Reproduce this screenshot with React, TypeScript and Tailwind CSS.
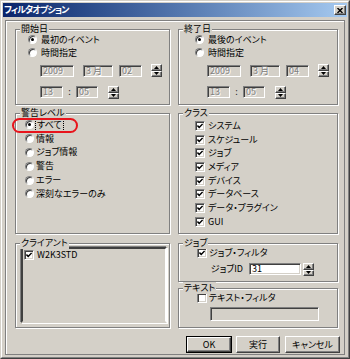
import type { ReactNode } from 'react';

const sunken =
  'border border-t-[#808080] border-l-[#808080] border-r-white border-b-white shadow-[inset_1px_1px_0_#404040,inset_-1px_-1px_0_#d4d0c8]';
const raised =
  'border border-t-white border-l-white border-r-[#404040] border-b-[#404040] shadow-[inset_-1px_-1px_0_#808080]';

function Radio({ checked }: { checked?: boolean }) {
  return (
    <span className="flex h-[9px] w-[9px] shrink-0 items-center justify-center rounded-full border border-t-[#808080] border-l-[#808080] border-r-white border-b-white bg-white shadow-[inset_1px_1px_0_#404040]">
      {checked && <span className="h-[3px] w-[3px] rounded-full bg-black" />}
    </span>
  );
}

function Check({ checked }: { checked?: boolean }) {
  return (
    <span className={`flex h-[10px] w-[10px] shrink-0 items-center justify-center bg-white ${sunken}`}>
      {checked && (
        <svg width="6" height="6" viewBox="0 0 6 6">
          <path d="M0.4 2.6 L2.2 4.4 L5.6 0.9" fill="none" stroke="#000" strokeWidth="1.5" />
        </svg>
      )}
    </span>
  );
}

function Group({
  label,
  className = '',
  children,
}: {
  label: string;
  className?: string;
  children?: ReactNode;
}) {
  return (
    <div className={`relative border border-[#808080] shadow-[inset_1px_1px_0_#fff,1px_1px_0_#fff] ${className}`}>
      <span className="absolute left-[4px] top-[-7px] bg-[#d4d0c8] px-[1px] leading-[12px]">{label}</span>
      {children}
    </div>
  );
}

function Field({ className, text }: { className: string; text?: string }) {
  return (
    <div
      className={`h-[12px] shrink-0 bg-[#d4d0c8] pl-[2px] leading-[10px] text-[#808080] [text-shadow:1px_1px_0_#fff] ${sunken} ${className}`}
    >
      {text}
    </div>
  );
}

function Spin({ className = '' }: { className?: string }) {
  return (
    <div className={`flex h-[13px] w-[11px] shrink-0 flex-col ${className}`}>
      <div className={`flex flex-1 items-center justify-center bg-[#d4d0c8] ${raised}`}>
        <svg width="5" height="3" viewBox="0 0 5 3">
          <path d="M0 3 L2.5 0 L5 3Z" fill="#000" />
        </svg>
      </div>
      <div className={`flex flex-1 items-center justify-center bg-[#d4d0c8] ${raised}`}>
        <svg width="5" height="3" viewBox="0 0 5 3">
          <path d="M0 0 L2.5 3 L5 0Z" fill="#000" />
        </svg>
      </div>
    </div>
  );
}

function RadioRow({ text, checked, gap = 'ml-[4px]', h = 'h-[13px]' }: { text: ReactNode; checked?: boolean; gap?: string; h?: string }) {
  return (
    <div className={`flex items-center ${h}`}>
      <Radio checked={checked} />
      <span className={`leading-[12px] ${gap}`}>{text}</span>
    </div>
  );
}

function CheckRow({ text, checked, gap = 'ml-[3px]', h = 'h-[13.7px]' }: { text: string; checked?: boolean; gap?: string; h?: string }) {
  return (
    <div className={`flex items-center ${h}`}>
      <Check checked={checked} />
      <span className={`leading-[12px] ${gap}`}>{text}</span>
    </div>
  );
}

function DateGroup({ label, first, day, pad }: { label: string; first: string; day: string; pad: string }) {
  return (
    <Group label={label} className={`h-[76px] pt-[3px] ${pad}`}>
      <RadioRow checked text={first} />
      <RadioRow text="時間指定" />
      <div className="ml-[12px] mt-[6px] flex h-[12px]">
        <Field className="w-[34px]" text="2009" />
        <Field className="ml-[9px] w-[30px]" text="3 月" />
        <Field className="ml-[6px] w-[23px]" text={day} />
        <Spin className="-mt-[1px] ml-[9px]" />
      </div>
      <div className="ml-[12px] mt-[9px] flex h-[12px]">
        <Field className="w-[23px]" text="13" />
        <span className="w-[13px] text-center leading-[11px] text-[#333]">:</span>
        <Field className="w-[22px]" text="05" />
        <Spin className="ml-[10px]" />
      </div>
    </Group>
  );
}

function Button({ children, className, isDefault }: { children: ReactNode; className: string; isDefault?: boolean }) {
  const inner = (
    <div className={`flex h-full w-full items-center justify-center bg-[#d4d0c8] leading-[12px] ${raised}`}>
      {children}
    </div>
  );
  return isDefault ? (
    <div className={`h-[17px] border border-black ${className}`}>{inner}</div>
  ) : (
    <div className={`h-[17px] ${className}`}>{inner}</div>
  );
}

export default function App() {
  const levels = ['情報', 'ジョブ情報', '警告', 'エラー', '深刻なエラーのみ'];
  const classes = ['システム', 'スケジュール', 'ジョブ', 'メディア', 'デバイス', 'データベース', 'データ・プラグイン', 'GUI'];

  return (
    <div className="h-[359px] w-[350px] border border-t-[#d4d0c8] border-l-[#d4d0c8] border-r-[#404040] border-b-[#404040] bg-[#d4d0c8] font-['Noto_Sans_CJK_JP','Noto_Sans',sans-serif] text-[9px] text-black [font-feature-settings:'palt']">
      <div className="h-full w-full border border-t-white border-l-white border-r-[#808080] border-b-[#808080] p-[1px]">
        {/* Title bar */}
        <div className="flex h-[14px] items-center bg-gradient-to-r from-[#0a246a] to-[#a6caf0] pl-[1px] pr-[1px]">
          <span className="font-bold leading-[12px] tracking-[-0.9px] text-white">フィルタオプション</span>
          <div className={`ml-auto flex h-[10px] w-[12px] items-center justify-center bg-[#d4d0c8] ${raised}`}>
            <svg width="6" height="5" viewBox="0 0 6 5">
              <path d="M0.5 0 L5.5 5 M5.5 0 L0.5 5" stroke="#000" strokeWidth="1.4" />
            </svg>
          </div>
        </div>

        {/* Client frame */}
        <div className="ml-[2px] mr-[2px] mt-[3px] h-[335px] border border-[#808080] pl-[9px] pr-[4px] pt-[8px] shadow-[inset_1px_1px_0_#fff]">
          <div className="flex gap-[8px]">
            <div className="flex w-[155px] flex-col">
              <DateGroup label="開始日" first="最初のイベント" day="02" pad="pl-[12px]" />

              <Group label="警告レベル" className="mt-[8px] h-[121px] pl-[9px] pt-[4px]">
                <div className="pointer-events-none absolute left-[-4px] top-[4px] h-[15px] w-[66px] rounded-[8px] border-2 border-[#e8141c]" />
                <RadioRow
                  checked
                  gap="ml-[1px]"
                  h="h-[13.8px]"
                  text={<span className="border border-dotted border-black px-[1px]">すべて</span>}
                />
                {levels.map((l) => (
                  <RadioRow key={l} text={l} gap="ml-[2px]" h="h-[13.8px]" />
                ))}
              </Group>

              <Group label="クライアント" className="mt-[9px] h-[85px] pb-[4px] pl-[5px] pr-[2px] pt-[3px]">
                <div className="h-full w-full border-2 border-t-[#404040] border-l-[#404040] border-r-[#fff] border-b-[#d4d0c8] pl-[1px] pt-[1px] shadow-[-1px_-1px_0_#808080,1px_1px_0_#fff]">
                  <div className="flex h-[10px] items-center">
                    <Check checked />
                    <span className="ml-[3px] leading-[12px]">W2K3STD</span>
                  </div>
                </div>
              </Group>
            </div>

            <div className="flex w-[160px] flex-col">
              <DateGroup label="終了日" first="最後のイベント" day="04" pad="pl-[16px]" />

              <Group label="クラス" className="mt-[8px] h-[121px] pl-[16px] pt-[5px]">
                {classes.map((c) => (
                  <CheckRow key={c} text={c} checked />
                ))}
              </Group>

              <Group label="ジョブ" className="mt-[9px] h-[39px] pl-[18px] pt-[3px]">
                <CheckRow text="ジョブ・フィルタ" checked gap="ml-[2px]" h="h-[12px]" />
                <div className="mt-[4px] flex h-[13px] items-start">
                  <span className="ml-[13px] w-[33px] text-right leading-[12px]">ジョブID</span>
                  <div className={`ml-[6px] h-[12px] w-[52px] bg-white pl-[2px] leading-[10px] ${sunken}`}>31</div>
                  <Spin className="ml-[2px]" />
                </div>
              </Group>

              <Group label="テキスト" className="mt-[6px] h-[40px] pl-[18px] pt-[3px]">
                <CheckRow text="テキスト・フィルタ" gap="ml-[2px]" h="h-[12px]" />
                <Field className="ml-[13px] mt-[3px] h-[14px] w-[109px]" />
              </Group>
            </div>
          </div>

          <div className="mt-[8px] flex justify-end">
            <Button isDefault className="w-[46px]">OK</Button>
            <Button className="ml-[4px] w-[44px]">実行</Button>
            <Button className="ml-[5px] w-[55px]">キャンセル</Button>
          </div>
        </div>
      </div>
    </div>
  );
}
